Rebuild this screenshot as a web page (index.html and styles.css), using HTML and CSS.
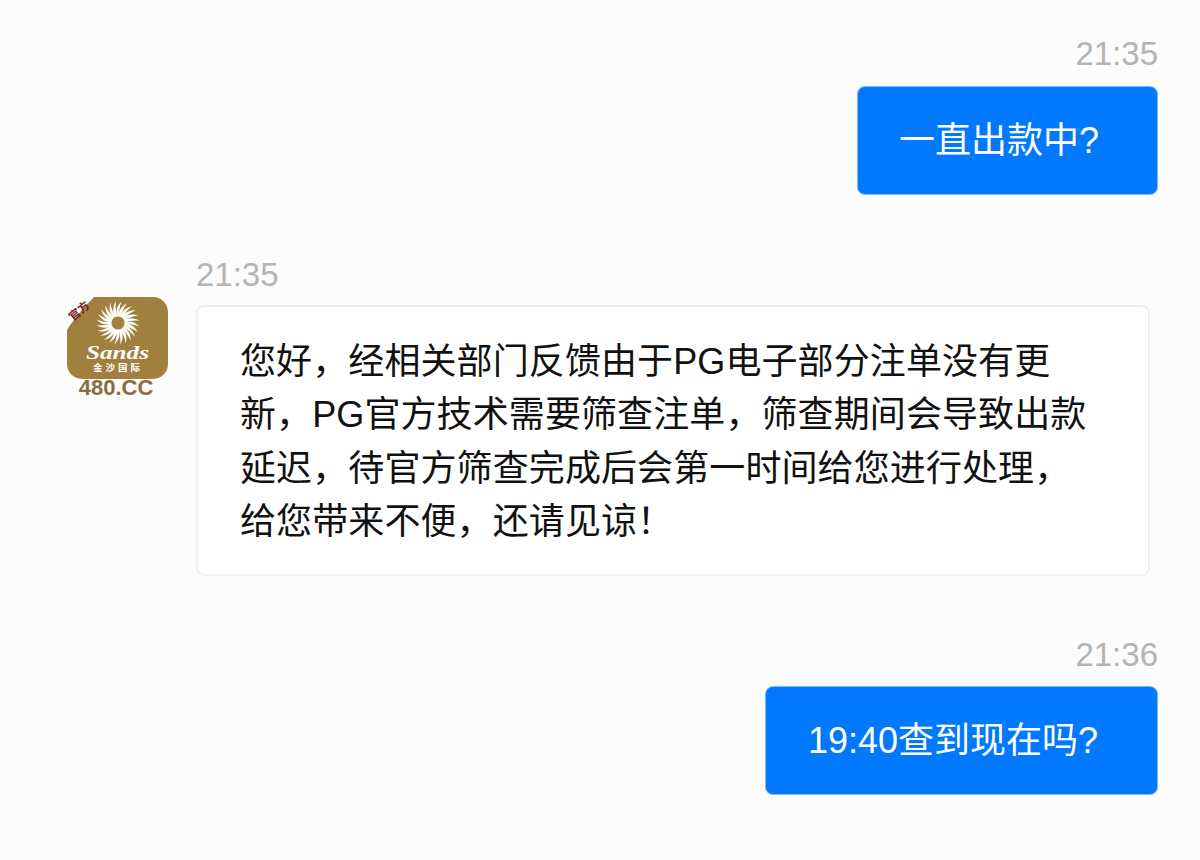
FILE: index.html
```html
<!DOCTYPE html>
<html lang="zh-CN">
<head>
<title>Chat</title>
<meta charset="UTF-8">
<meta name="viewport" content="width=device-width, initial-scale=1">
<link rel="stylesheet" href="styles.css">
</head>
<body>

<div class="chat">

  <div class="msg mine first">
    <div class="time">21:35</div>
    <div class="bubble blue">一直出款中?</div>
  </div>

  <div class="msg theirs">
    <svg class="avatar" viewBox="0 0 101 106" width="101" height="106">
      <defs>
        <path id="ray" d="M-1 -6.5 C-2.6 -12 -1 -17 3.6 -21.5 C1.4 -16.5 1 -11.5 1 -6.5 Z"/>
      </defs>
      <rect class="gold" width="101" height="82" rx="15"/>
      <path class="corner" d="M0 -1 H28 C19 8 9 19 0 33 Z"/>
      <text class="badge" transform="translate(6 24.5) rotate(-40)">官方</text>
      <g class="sun" transform="translate(51 26)">
        <use href="#ray"/>
        <use href="#ray" transform="rotate(15)"/>
        <use href="#ray" transform="rotate(30)"/>
        <use href="#ray" transform="rotate(45)"/>
        <use href="#ray" transform="rotate(60)"/>
        <use href="#ray" transform="rotate(75)"/>
        <use href="#ray" transform="rotate(90)"/>
        <use href="#ray" transform="rotate(105)"/>
        <use href="#ray" transform="rotate(120)"/>
        <use href="#ray" transform="rotate(135)"/>
        <use href="#ray" transform="rotate(150)"/>
        <use href="#ray" transform="rotate(165)"/>
        <use href="#ray" transform="rotate(180)"/>
        <use href="#ray" transform="rotate(195)"/>
        <use href="#ray" transform="rotate(210)"/>
        <use href="#ray" transform="rotate(225)"/>
        <use href="#ray" transform="rotate(240)"/>
        <use href="#ray" transform="rotate(255)"/>
        <use href="#ray" transform="rotate(270)"/>
        <use href="#ray" transform="rotate(285)"/>
        <use href="#ray" transform="rotate(300)"/>
        <use href="#ray" transform="rotate(315)"/>
        <use href="#ray" transform="rotate(330)"/>
        <use href="#ray" transform="rotate(345)"/>
      </g>
      <text class="sands" x="19" y="62" textLength="63" lengthAdjust="spacingAndGlyphs">Sands</text>
      <text class="cn" x="26" y="74">金沙国际</text>
      <text class="site" x="49" y="98" text-anchor="middle">480.CC</text>
    </svg>
    <div class="body">
      <div class="time">21:35</div>
      <div class="bubble white">您好，经相关部门反馈由于PG电子部分注单没有更<br>新，PG官方技术需要筛查注单，筛查期间会导致出款<br>延迟，待官方筛查完成后会第一时间给您进行处理，<br>给您带来不便，还请见谅！</div>
    </div>
  </div>

  <div class="msg mine last">
    <div class="time">21:36</div>
    <div class="bubble blue">19:40查到现在吗?</div>
  </div>

</div>

</body>
</html>
```

FILE: styles.css
```css
* {
  box-sizing: border-box;
}

body {
  margin: 0;
  background: #fcfcfc;
  font-family: "Liberation Sans", "Noto Sans CJK SC", sans-serif;
}

.chat {
  padding: 34px 42px 0 67px;
}

/* one message: time above the bubble */
.msg {
  margin-top: 60px;
}

.msg.first {
  margin-top: 0;
}

.msg.last {
  margin-top: 59px;
}

.mine {
  display: flex;
  flex-direction: column;
  align-items: flex-end;
}

.theirs {
  display: flex;
  gap: 28px;
  padding-right: 8px;
}

.body {
  flex: 1;
}

.time {
  font-size: 33px;
  line-height: 40px;
  color: #b4b4b4;
}

.bubble {
  font-size: 36px;
  border-radius: 8px;
}

.blue {
  height: 109px;
  margin-top: 12px;
  padding: 0 58px 0 41px;
  line-height: 108px;
  color: #fff;
  background: #0079fe;
  border: 1px solid #7cb8fb;
}

.last .blue {
  margin-top: 11px;
  padding: 0 59px 0 42px;
}

.white {
  height: 271px;
  margin-top: 10px;
  padding: 28px 20px 0 42px;
  line-height: 53.4px;
  letter-spacing: 0.1px;
  color: #111;
  background: #fff;
  border: 2px solid #f0f0f0;
}

.avatar {
  flex: none;
  margin-top: 42px;
}

.gold {
  fill: #a1803f;
}

.corner {
  fill: #fcfcfc;
}

.sun {
  fill: #fff;
}

.badge {
  font-size: 11.5px;
  font-weight: 700;
  fill: #7a1c1c;
}

.sands {
  font-family: "Liberation Serif", serif;
  font-size: 19px;
  font-style: italic;
  font-weight: 700;
  fill: #fff;
}

.cn {
  font-size: 9.5px;
  font-weight: 700;
  letter-spacing: 3px;
  fill: #fff;
}

.site {
  font-size: 22px;
  font-weight: 700;
  fill: #8a6d3a;
}
```
